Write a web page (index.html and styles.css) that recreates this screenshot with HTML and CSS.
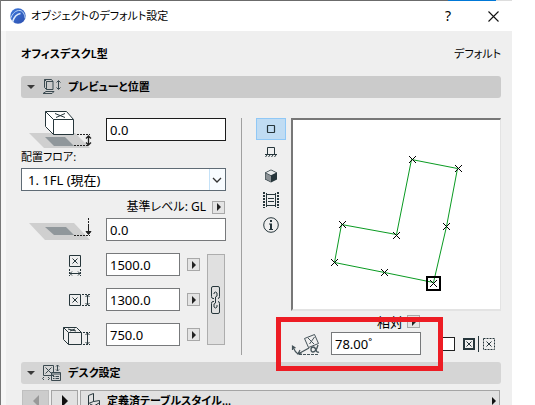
FILE: index.html
```html
<!DOCTYPE html>
<html lang="ja">
<head>
<meta charset="utf-8">
<title>オブジェクトのデフォルト設定</title>
<link rel="stylesheet" href="styles.css">
</head>
<body>
<div class="window">
  <div class="top-edge"></div>
  <header class="titlebar">
    <svg class="logo" width="16" height="16" viewBox="0 0 16 16"><defs><linearGradient id="lg" x1="0" y1="0" x2="1" y2="1"><stop offset="0" stop-color="#3d78dc"/><stop offset="1" stop-color="#2d4fae"/></linearGradient></defs><circle cx="8" cy="8" r="7.700" fill="url(#lg)"/><path d="M.5 11C2 5.500 6 2 10 2.500c2.800.4 4.600 3.500 5.200 8" fill="none" stroke="#b9d5f6" stroke-width="1"/><path d="M2.500 14C4 9 7 6 10.500 5.500" fill="none" stroke="#dcebfc" stroke-width="1.700"/></svg>
    <h1 class="title">オブジェクトのデフォルト設定</h1>
    <button class="caption help" aria-label="ヘルプ">?</button>
    <button class="caption" aria-label="閉じる"><svg width="11" height="11" viewBox="0 0 11 11"><path d="M.5.5l10 10M10.500.5l-10 10" stroke="#111" stroke-width="1.100"/></svg></button>
  </header>
  <main class="dialog">
    <div class="heading"><strong>オフィスデスクL型</strong><span>デフォルト</span></div>

    <h2 class="section">
      <i class="fold"></i>
      <svg class="section-icon" width="20" height="18" viewBox="0 0 20 18" fill="none" stroke="#3b4a50"><path d="M2.500 1.500h7l1.500 2v8H4.500l-2-2z"/><path d="M4.500 3.500h6.500M4.500 3.500v8M2.500 1.500l2 2M4 13.500l-3 2h9l2-2z"/><path d="M16.500 3v8M14.500 4.500l2-2 2 2M14.500 9.500l2 2 2-2"/></svg>
      <span>プレビューと位置</span>
    </h2>

    <div class="panel">
      <div class="form">
        <div class="row first">
          <svg class="field-icon" width="85" height="40" viewBox="21 109 85 40"><path d="M29 132h46l15 15H44z" fill="#cfcfcf"/><path d="M45 136h20l9 9H54z" fill="#90979b"/><path d="M45.500 110.500h21l7 8v15h-20l-8-8z" fill="#fff" stroke="#26363b"/><path d="M45.500 110.500l8 8h20M53.500 118.500v15M55 112.500l10 4M65 112.500l-9 4" fill="none" stroke="#26363b"/><path d="M77 133.500h13M74 144.500h14" stroke="#222" stroke-dasharray="2 1"/><path d="M88.500 135v9M86 137.500l2.500-2.500 2.500 2.500M86 141.500l2.500 2.500 2.500-2.500" fill="none" stroke="#222" stroke-width="1.300"/></svg>
          <input class="field active" aria-label="高さ" value="0.0">
        </div>
        <label class="floor-label" for="floor">配置フロア:</label>
        <div class="select-wrap">
          <select id="floor" class="floor"><option>1. 1FL (現在)</option></select>
          <svg class="chevron" width="16" height="21" viewBox="0 0 16 21"><path d="M0 0h16v21H0z" fill="#f8fcff"/><path d="M.5 0v21" stroke="#c5e2f8"/><path d="M4 9l4 4 4-4" fill="none" stroke="#333" stroke-width="1.300"/></svg>
        </div>
        <div class="level"><label for="level">基準レベル: GL</label><button class="arrow" aria-label="基準レベルを選択"></button></div>
        <div class="row">
          <svg class="field-icon" width="85" height="23" viewBox="21 218 85 23"><path d="M29 223h45l16 17H45z" fill="#cfcfcf"/><path d="M45 227h21l8 8H54z" fill="#90979b"/><path d="M74 235.500h16M88.500 218v7" stroke="#222" stroke-dasharray="2 1"/><path d="M88.500 225v9M86 231.500l2.500 3 2.500-3z" fill="#222" stroke="#222"/></svg>
          <input id="level" class="field" value="0.0">
        </div>
        <div class="sizes">
          <div class="size-list">
            <div class="row">
              <svg class="field-icon" width="85" height="23" viewBox="21 253 85 23" fill="none" stroke="#26363b"><path d="M69.500 255.500h11v11h-11zM72.500 258.500l5 5M77.500 258.500l-5 5M70 273.500h10M72 271.500l-2 2 2 2M78 271.500l2 2-2 2"/><path d="M69.500 269v7M80.500 269v7" stroke-dasharray="2 1"/></svg>
              <input class="field" aria-label="幅" value="1500.0"><button class="arrow" aria-label="幅の候補"></button>
            </div>
            <div class="row">
              <svg class="field-icon" width="85" height="23" viewBox="21 288 85 23" fill="none" stroke="#26363b"><path d="M69.500 294.500h11v11h-11zM72.500 297.500l5 5M77.500 297.500l-5 5M87.500 295v10M85.500 297l2-2 2 2M85.500 303l2 2 2-2"/><path d="M82 294.500h8M82 305.500h8" stroke-dasharray="2 1"/></svg>
              <input class="field" aria-label="奥行" value="1300.0"><button class="arrow" aria-label="奥行の候補"></button>
            </div>
            <div class="row">
              <svg class="field-icon" width="85" height="23" viewBox="21 323 85 23" fill="none" stroke="#26363b"><path d="M63.500 327.500h13l5 5v12h-13l-5-5zM63.500 327.500l5 5h13M68.500 332.500v12M68 329l8 2M75 329l-5 2M87.500 333v11M85.500 335l2-2 2 2M85.500 342l2 2 2-2"/><path d="M83 332.500h7M83 344.500h7" stroke-dasharray="2 1"/></svg>
              <input class="field" aria-label="高さ寸法" value="750.0"><button class="arrow" aria-label="高さの候補"></button>
            </div>
          </div>
          <button class="link" aria-label="寸法を連動"><svg width="10" height="28" viewBox="0 0 10 28" fill="none" stroke="#26363b"><path d="M3 12.500H2q-1.500 0-1.500-2V2Q.5.5 2 .5h5q1.500 0 1.500 1.500v8.500q0 2-1.500 2M3 15.500H2q-1.500 0-1.500 2V26q0 1.500 1.500 1.500h5q1.500 0 1.500-1.500v-8.500q0-2-1.500-2M3 8V7q1.500-2 3 0v3l-1.500 1v6L3 18v3q1.500 2 3 0v-2"/></svg></button>
        </div>
      </div>

      <div class="divider"></div>

      <div class="views">
        <button class="view selected" aria-label="2Dシンボル"><svg width="10" height="10" viewBox="0 0 10 10"><rect x="1.500" y="1.500" width="7" height="7" rx=".5" fill="none" stroke="#26363b" stroke-width="1.200"/></svg></button>
        <button class="view" aria-label="正面"><svg width="12" height="12" viewBox="0 0 12 12" fill="none" stroke="#26363b"><path d="M2.500 8V1.500h7V8M0 8.500h12M2 9l-1.500 2M5 9l-1.500 2M8 9l-1.500 2M11 9l-1.500 2"/></svg></button>
        <button class="view" aria-label="3D表示"><svg width="14" height="14" viewBox="0 0 14 14"><path d="M7 .5l6 3v7L7 13.500l-6-3v-7z" fill="#26363b"/><path d="M1.500 4L7 7v6l-5.500-3z" fill="#8b9195"/><path d="M2 3.700L7 1.200l5 2.500-5 2.600z" fill="#e9ebec"/></svg></button>
        <button class="view" aria-label="プレビュー画像"><svg width="16" height="16" viewBox="0 0 16 16" fill="none" stroke="#26363b"><path d="M1 0v16M15 0v16" stroke-width="2" stroke-dasharray="2 1"/><path d="M3.500 1v14M12.500 1v14M3 2.500h10M3 13.500h10M5 6.500h6M5 9.500h6"/></svg></button>
        <button class="view" aria-label="情報"><svg width="16" height="16" viewBox="0 0 16 16"><circle cx="8" cy="8" r="7.300" fill="none" stroke="#26363b"/><path d="M7 3h2v2H7zM6 6.500h3V12h1v1H6v-1h1V7.500H6z" fill="#26363b"/></svg></button>
      </div>

      <div class="preview-side">
        <div class="preview">
          <svg width="206" height="189" viewBox="293 120 206 189" fill="none">
            <path d="M411.500 159.500L457.500 168.500L446.500 226.500L433.500 282.500L384.500 272.500L334.500 262.500L341.500 224.500L396.500 234.500z" stroke="#0a9b22"/>
            <path d="M409 156l7 7m0-7l-7 7M455 165l7 7m0-7l-7 7M443 223l7 7m0-7l-7 7M430 280l7 7m0-7l-7 7M381 269l7 7m0-7l-7 7M331 259l7 7m0-7l-7 7M339 221l7 7m0-7l-7 7M393 232l7 7m0-7l-7 7" stroke="#000"/>
            <rect x="427" y="277" width="13" height="13" stroke="#000" stroke-width="2"/>
          </svg>
        </div>
        <div class="relative-row"><span>相対</span><button class="arrow" aria-label="角度の基準"></button></div>
        <div class="angle-row">
          <svg class="angle-icon" width="40" height="23" viewBox="291 332 40 23" fill="none" stroke="#46545a"><path d="M304.500 338.500l10-4 4 9-10 4zM308 338l6 6M314.500 337l-5 7"/><path d="M293 347q2 5 5 7l11-6M292.500 350v-4l3 2M300 350l-2 4 4 0" stroke-width="1.200"/><path d="M299 354.500h20" stroke-dasharray="3 1"/><path d="M318 345q-2 7-5 7-2 0-2-2.500t2-2.500q2 0 3 3t3 2" stroke-width="1.300"/></svg>
          <input class="field angle" aria-label="角度" value="78.00˚">
          <button class="anchor mirror" aria-label="ミラー"></button>
          <button class="anchor" aria-label="配置"><svg width="12" height="12" viewBox="0 0 12 12" fill="none" stroke="#26363b"><rect x="1" y="1" width="10" height="10" stroke-width="2"/><path d="M3.500 3.500l5 5M8.500 3.500l-5 5"/></svg></button>
          <span class="separator"></span>
          <button class="anchor" aria-label="反転配置"><svg width="12" height="12" viewBox="0 0 12 12" fill="none" stroke="#26363b"><rect x=".5" y=".5" width="11" height="11" stroke-dasharray="2 1"/><path d="M3.500 3.500l5 5M8.500 3.500l-5 5"/></svg></button>
        </div>
        <div class="highlight"></div>
      </div>
    </div>

    <h2 class="section desk">
      <i class="fold"></i>
      <svg class="section-icon" width="20" height="18" viewBox="0 0 20 18" fill="none" stroke="#3b4a50"><path d="M12 11.500H1.500v-10h10V8M3.500 3.500l6 6M9.500 3.500l-6 6M15.500 1v6M14 2.500l1.500-1.500L17 2.500M14 5.500L15.500 7 17 5.500M2 13l-1.500 1.500L2 16M6 13l1.500 1.500L6 16"/><path d="M9.500 8.500h9v8h-9zM9.500 10h9M11 12.500h1.500M11 14.500h1.500M13.500 12.500H17M13.500 14.500H17"/></svg>
      <span>デスク設定</span>
    </h2>
    <nav class="pages">
      <button class="page previous" aria-label="前のページ" disabled></button>
      <button class="page" aria-label="次のページ"></button>
      <button class="page-menu">
        <svg width="16" height="16" viewBox="0 0 16 16" fill="none" stroke="#26363b"><path d="M1.500 16V2.500l5-2v8l-5 2M6.500 8.500l6-1 0 5-6 3-5-3M3 11l4 2 5-3"/></svg>
        <strong>定義済テーブルスタイル...</strong><i class="more"></i>
      </button>
    </nav>
  </main>
</div>
</body>
</html>
```
FILE: styles.css
```css
* { box-sizing: border-box; }
html, body { height: 100%; }
body {
  margin: 0;
  overflow: hidden;
  background: #fff;
  color: #000;
  font: 13px/16px "Noto Sans", "Noto Sans CJK JP", sans-serif;
  font-feature-settings: "palt";
}
button, input, select { font: inherit; font-feature-settings: inherit; color: inherit; margin: 0; border-radius: 0; }
button { padding: 0; border: 0; background: none; display: flex; align-items: center; justify-content: center; }
svg { display: block; flex: none; }
h1, h2 { margin: 0; font: inherit; }
strong { font-weight: 600; }

.window {
  display: flex;
  flex-direction: column;
  min-height: 100%;
  margin-right: 23px;
  border-left: 1px solid #777;
  background: #f6f6f6;
}
.top-edge {
  height: 1px;
  background: linear-gradient(to left, #ddd 16px, #0078d7 16px, #0078d7 64px, #6b6b6b 64px);
}
.titlebar { display: flex; align-items: center; height: 30px; padding: 0 7px 0 9px; background: #fff; }
.title { flex: 1; margin-left: 5px; font-size: 11px; }
.caption { width: 24px; height: 24px; margin-left: 21px; }
.help { font-size: 14px; margin: 0; }

.dialog { flex: 1; margin-left: 5px; padding: 0 11px 0 15px; background: #efefef; }
.heading { display: flex; justify-content: space-between; align-items: center; height: 45px; font-size: 11px; }
.section {
  display: flex;
  align-items: center;
  height: 22px;
  padding-left: 6px;
  border-radius: 3px;
  background: #cbcbcb;
  font-size: 11px;
  font-weight: 600;
}
.desk { margin-top: 7px; background: #d5d5d5; }
.fold { border: 4px solid transparent; border-top-color: #3a3a3a; border-bottom: 0; }
.section-icon { margin: 0 6px 0 7px; }

.panel { display: flex; padding-top: 20px; }
.form { width: 205px; flex: none; }
.row { display: flex; align-items: center; }
.field {
  flex: 1;
  width: 0;
  height: 23px;
  padding: 0 3px;
  border: 1px solid #77797b;
  background: #fff;
  outline: 0;
}
.active { border-color: #1c1c1c; }
.first { height: 23px; }
.floor-label { display: block; margin: 8px 0 3px; font-size: 11px; }
.select-wrap { position: relative; }
.floor {
  display: block;
  width: 100%;
  height: 23px;
  padding: 0 20px 0 6px;
  appearance: none;
  border: 1px solid #5f6b75;
  background: #fff;
}
.chevron { position: absolute; right: 1px; top: 1px; pointer-events: none; }
.level { display: flex; align-items: center; justify-content: flex-end; gap: 6px; height: 27px; padding: 5px 1px 0 0; font-size: 12px; }
.arrow { width: 13px; height: 13px; border: 1px solid #a8a8a8; background: #e4e4e4; flex: none; }
.arrow::before { content: ""; border: 4px solid transparent; border-left-color: #222; border-right: 0; }
.sizes { display: flex; gap: 7px; margin-top: 12px; }
.size-list { flex: 1; display: grid; gap: 12px; }
.size-list .arrow { margin-left: 7px; }
.link { width: 18px; margin: 1px 1px 1px 0; border: 1px solid #adadad; background: #e0e0e0; }
.divider { width: 1px; margin: 0 14px 0 15px; background: #a0a0a0; }

.views { width: 30px; margin-right: 5px; }
.view { width: 30px; height: 24px; }
.view:last-child { height: 26px; }
.selected { height: 22px; border: 1px solid #90c8f6; background: #c0dcf3; }

.preview-side { flex: 1; position: relative; }
.preview {
  height: 193px;
  border: 2px solid #696969;
  border-color: #777 #e3e3e3 #e3e3e3 #777;
  border-right-width: 1px;
  background: #fff;
}
.relative-row { display: flex; align-items: center; gap: 4px; height: 21px; padding-left: 86px; }
.relative-row span { width: 26px; }
.angle-row { display: flex; align-items: center; }
.angle { flex: 0 0 90px; }
.anchor { height: 14px; margin-left: 4px; }
.mirror { width: 14px; margin: 0 4px 0 20px; border: 1px solid #222; background: #fff; }
.separator { width: 1px; height: 16px; margin-left: 3px; background: #26363b; }
.highlight {
  position: absolute;
  left: -15px;
  bottom: -16px;
  width: 167px;
  height: 54px;
  border: 5px solid #ed1c24;
  pointer-events: none;
}

.pages { display: flex; gap: 2px; margin: 6px 1px 0; }
.page, .page-menu { height: 22px; border: 1px solid #a5a5a5; background: #e1e1e1; }
.page { width: 27px; }
.page::before, .more { content: ""; border: 6px solid transparent; border-left-color: #111; border-right: 0; }
.previous { background: #ccc; border-color: #bfbfbf; }
.previous::before { border-right: 6px solid #999; border-left: 0; }
.page-menu { flex: 1; justify-content: flex-start; padding: 0 3px 0 6px; gap: 4px; font-size: 11px; }
.more { margin-left: auto; border-width: 4px; border-right: 0; }
```
